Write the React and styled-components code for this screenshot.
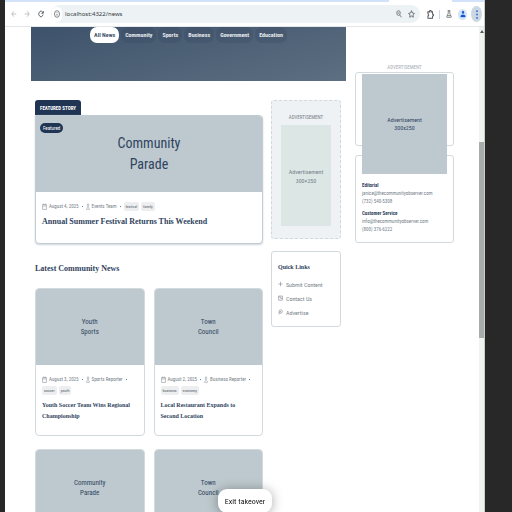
import React from "react";
import styled, { createGlobalStyle, css } from "styled-components";

const sans = `"Roboto Condensed", Roboto, "Liberation Sans", sans-serif`;
const serif = `"Liberation Serif", serif`;
const navy = "#1f3553";
const ink = "#2f4360";
const muted = "#757f8a";
const line = "#d3dade";
const slate = "#bdc9ce";

const GlobalStyle = createGlobalStyle`
  * { box-sizing: border-box; }
  body { margin: 0; background: #282828; font-family: ${sans}; overflow: hidden; }
  h2, h3, p { margin: 0; }
  a { color: inherit; text-decoration: none; }
  button { font-family: inherit; border: 0; padding: 0; cursor: pointer; }
`;

const Desktop = styled.div`
  display: grid;
  grid-template-columns: 5px minmax(0, 1fr) 27px;
  height: 100vh;
  overflow: hidden;
`;
const BrowserWindow = styled.div`
  grid-column: 2;
  display: flex;
  flex-direction: column;
  min-height: 0;
  background: #fff;
  border-right: 1px solid #c9cecb;
`;
const TabStrip = styled.div`
  display: grid;
  grid-template-columns: 385fr 63fr 32fr;
  height: 2px;
  flex: none;
`;
const TabGap = styled.span`
  background: ${(p) => (p.$active ? "#fff" : "#d3e2fb")};
`;
const Toolbar = styled.header`
  display: flex;
  align-items: center;
  height: 25px;
  flex: none;
  padding: 0 2px;
  border-bottom: 1px solid #e3e7ea;
`;
const Tools = styled.div`
  display: flex;
  align-items: center;
  gap: 4px;
`;
const ToolButton = styled.button`
  display: grid;
  place-items: center;
  flex: none;
  width: ${(p) => p.$w || 14}px;
  height: ${(p) => p.$h || 16}px;
  border-radius: 50%;
  background: ${(p) => p.$bg || "transparent"};
  color: ${(p) => p.$color || "#4d5359"};
`;
const Omnibox = styled.div`
  display: flex;
  align-items: center;
  gap: 3px;
  flex: 1;
  min-width: 0;
  height: 18px;
  margin: 0 5px 0 4px;
  padding: 0 3px 0 1px;
  border-radius: 9px;
  background: #edf2f5;
  color: #4d5359;
`;
const InfoDisc = styled.span`
  display: grid;
  place-items: center;
  width: 10px;
  height: 15px;
  border-radius: 5px;
  background: #fff;
`;
const Address = styled.input`
  flex: 1;
  min-width: 0;
  border: 0;
  padding: 0;
  background: transparent;
  font: 6px/16px "Noto Sans", sans-serif;
  color: #34393e;
  outline: none;
`;
const Divider = styled.span`
  width: 1px;
  height: 9px;
  background: #c5d8f4;
`;

const Viewport = styled.div`
  display: flex;
  flex: 1;
  min-height: 0;
`;
const Page = styled.div`
  flex: 1;
  display: grid;
  grid-template-columns: minmax(0, 315fr) minmax(0, 99fr);
  gap: 9px;
  align-items: start;
  padding: 0 25px 0 26px;
  overflow: hidden;
`;
const Scrollbar = styled.div`
  display: flex;
  flex-direction: column;
  align-items: center;
  width: 5px;
  background: #eff4f1;
`;
const ScrollArrow = styled.span`
  margin: 3px 0 109px;
  border: 2px solid transparent;
  border-top: 0;
  border-bottom: 3px solid #555b58;
`;
const ScrollThumb = styled.span`
  width: 100%;
  height: 196px;
  background: #a6adaa;
`;

const Hero = styled.nav`
  display: flex;
  align-items: flex-start;
  justify-content: center;
  gap: 2px;
  height: 54px;
  background: linear-gradient(165deg, #3d526b, #5d6f81);
`;
const Chip = styled.button`
  height: 16px;
  padding: 0 4px;
  border-radius: 7px;
  font-size: 6px;
  font-weight: 700;
  line-height: 16px;
  background: ${(p) => (p.$active ? "#fff" : "rgba(48, 66, 90, 0.22)")};
  color: ${(p) => (p.$active ? "#3d5068" : "#e6eaee")};
`;
const Columns = styled.div`
  display: grid;
  grid-template-columns: minmax(0, 228fr) minmax(0, 70fr);
  gap: 8px;
  align-items: start;
  padding: 19px 5px 0 4px;
`;
const Ribbon = styled.p`
  width: fit-content;
  height: 15px;
  padding: 0 5px;
  border-radius: 3px 3px 0 0;
  background: ${navy};
  color: #fff;
  font-size: 5px;
  font-weight: 700;
  line-height: 16px;
`;
const Card = styled.article`
  position: relative;
  min-height: 148px;
  border: 1px solid ${line};
  border-radius: 4px;
  background: #fff;
  overflow: hidden;
  ${(p) =>
    p.$featured &&
    css`
      min-height: 129px;
      border-top-left-radius: 0;
      border-color: #c3ccd2;
      box-shadow: 0 1px 2px #cdd4da;
    `}
`;
const Picture = styled.div`
  display: flex;
  align-items: center;
  justify-content: center;
  height: 76px;
  background: ${slate};
  color: ${ink};
  text-align: center;
  white-space: pre-line;
  font-size: ${(p) => (p.$large ? 14 : 7)}px;
  line-height: ${(p) => (p.$large ? 21 : 10)}px;
`;
const Badge = styled.span`
  position: absolute;
  top: 7px;
  left: 4px;
  padding: 0 3px;
  border-radius: 5px;
  background: ${navy};
  color: #fff;
  font-size: 5px;
  line-height: 10px;
`;
const CardBody = styled.div`
  padding: 10px 6px 0;
`;
const Meta = styled.div`
  display: flex;
  flex-wrap: wrap;
  align-items: center;
  gap: 2px;
  color: ${muted};
  font-size: 5px;
  line-height: 9px;
  white-space: nowrap;
`;
const Dot = styled.span`
  width: 1px;
  height: 1px;
  margin: 0 1px;
  background: ${muted};
`;
const Tags = styled.div`
  display: flex;
  gap: 2px;
  ${(p) => p.$row && css`flex-basis: 100%;`}
`;
const Tag = styled.span`
  padding: 0 2px;
  border-radius: 2px;
  background: #eceef0;
  color: #4c5662;
  font-size: 4px;
  line-height: 9px;
`;
const Headline = styled.h3`
  margin-top: 5px;
  padding-right: 4px;
  color: ${ink};
  font-family: ${serif};
  font-size: ${(p) => (p.$featured ? 8 : 6)}px;
  font-weight: 700;
  line-height: 11px;
`;
const SectionTitle = styled.h2`
  margin: 19px 0 13px;
  color: ${ink};
  font-family: ${serif};
  font-size: 8px;
  line-height: 12px;
`;
const CardGrid = styled.div`
  display: grid;
  grid-template-columns: repeat(2, minmax(0, 1fr));
  gap: 13px 9px;
`;

const SideColumn = styled.aside`
  display: grid;
  gap: 12px;
`;
const AdPanel = styled.section`
  padding: 12px 9px;
  border: 1px dashed #d0d9de;
  border-radius: 3px;
  background: #eef2f5;
`;
const AdLabel = styled.p`
  color: ${(p) => (p.$light ? "#a6adb4" : muted)};
  font-size: 5px;
  line-height: 9px;
  text-align: center;
`;
const AdBox = styled.div`
  display: grid;
  place-content: center;
  height: 101px;
  margin-top: 3px;
  background: #dce6e5;
  color: ${muted};
  font-size: 6px;
  line-height: 9px;
  text-align: center;
  white-space: pre-line;
`;
const Panel = styled.section`
  border: 1px solid ${line};
  border-radius: 3px;
  padding: 10px 6px 7px;
`;
const PanelTitle = styled.h3`
  margin-bottom: 5px;
  color: ${ink};
  font-family: ${serif};
  font-size: 6px;
  line-height: 10px;
`;
const QuickLink = styled.a`
  display: flex;
  align-items: center;
  gap: 3px;
  height: 14px;
  color: ${muted};
  font-size: 6px;
`;

const OuterRail = styled.aside`
  padding-top: 36px;
`;
const AdSlot = styled(Panel)`
  position: relative;
  height: 74px;
  margin-bottom: 9px;
`;
const FloatingAd = styled.div`
  position: absolute;
  top: 1px;
  left: 6px;
  right: 6px;
  display: grid;
  place-content: center;
  height: 100px;
  background: ${slate};
  color: ${ink};
  font-size: 6px;
  line-height: 8px;
  text-align: center;
  white-space: pre-line;
`;
const ContactPanel = styled(Panel)`
  padding: 25px 6px 5px;
`;
const Contact = styled.address`
  display: flex;
  flex-direction: column;
  margin-bottom: 4px;
  color: ${muted};
  font-size: 5px;
  font-style: normal;
  line-height: 8px;
`;
const ContactName = styled.strong`
  color: ${ink};
`;
const ExitButton = styled.button`
  position: fixed;
  bottom: -1px;
  left: calc(50% - 38px);
  width: 54px;
  height: 24px;
  border-radius: 9px;
  background: #fff;
  color: #141414;
  font-size: 8px;
  box-shadow: 0 1px 12px rgba(0, 0, 0, 0.35);
`;

const shapes = {
  back: <path d="M21 12H4M11 4l-8 8 8 8" />,
  forward: <path d="M3 12h17M13 4l8 8-8 8" />,
  reload: <path d="M20 14a8.5 8.5 0 1 1-2-8l3 3M21 3v7h-7" />,
  info: <><circle cx="12" cy="12" r="10" /><path d="M12 11v6M12 6v2" /></>,
  zoom: <><circle cx="10" cy="9" r="7" /><path d="M15 15l7 7M7 9h6" /></>,
  star: <path d="M12 2l3 7 7 1-5 5 1 7-6-4-6 4 1-7-5-5 7-1z" />,
  puzzle: <path d="M3 5h6V3a2 2 0 0 1 5 0v2h5v6h1a2 2 0 0 1 0 5h-1v6H3v-6a3 3 0 0 0 0-6z" />,
  flask: <path d="M7 2h10M9 2v8L3 20q-1 2 2 2h14q3 0 2-2l-6-10V2M6 17h12" />,
  person: <g fill="currentColor"><circle cx="12" cy="7" r="4" /><path d="M3 21v-3q1-4 9-4t9 4v3z" /></g>,
  dots: <g fill="currentColor" stroke="none"><ellipse cx="12" cy="3" rx="3.4" ry="2.4" /><ellipse cx="12" cy="12" rx="3.4" ry="2.4" /><ellipse cx="12" cy="21" rx="3.4" ry="2.4" /></g>,
  calendar: <path d="M3 5h18v17H3zM3 10h18M8 2v4M16 2v4" />,
  user: <path d="M12 2a4 5 0 1 0 .1 0zM4 22c0-6 3-8 8-8s8 2 8 8z" />,
  plus: <path d="M12 3v18M2 12h20" />,
  mail: <path d="M3 4h18v17H3zM3 8h10v6h8" />,
  advert: <path d="M5 22V10a8 7 0 1 1 7 7h-3v-7h6" />,
};
const Icon = ({ name, w = 7, h = 8, stroke = 2.4 }) => (
  <svg width={w} height={h} viewBox="0 0 24 24" preserveAspectRatio="none" fill="none"
    stroke="currentColor" strokeWidth={stroke} aria-hidden="true">
    {shapes[name]}
  </svg>
);

const categories = ["All News", "Community", "Sports", "Business", "Government", "Education"];
const stories = [
  { art: "Youth\nSports", date: "August 3, 2025", by: "Sports Reporter", tags: ["soccer", "youth"], title: "Youth Soccer Team Wins Regional Championship" },
  { art: "Town\nCouncil", date: "August 2, 2025", by: "Business Reporter", tags: ["business", "economy"], title: "Local Restaurant Expands to Second Location" },
  { art: "Community\nParade" },
  { art: "Town\nCouncil" },
];
const quickLinks = [["plus", "Submit Content"], ["mail", "Contact Us"], ["advert", "Advertise"]];
const contacts = [
  ["Editorial", "janice@thecommunityobserver.com", "(732) 540-5308"],
  ["Customer Service", "info@thecommunityobserver.com", "(800) 376-6222"],
];

const Byline = ({ date, by, tags, tagRow }) => (
  <Meta>
    <Icon name="calendar" w={5} h={7} stroke={2} />
    <time>{date}</time>
    <Dot />
    <Icon name="user" w={4} h={7} stroke={2} />
    <span>{by}</span>
    <Dot />
    <Tags $row={tagRow}>{tags.map((t) => <Tag key={t}>{t}</Tag>)}</Tags>
  </Meta>
);

export default function App() {
  return (
    <>
      <GlobalStyle />
      <Desktop>
        <BrowserWindow>
          <TabStrip><TabGap /><TabGap $active /><TabGap /></TabStrip>
          <Toolbar>
            <ToolButton $w={13} $color="#a3a9ae" aria-label="Back"><Icon name="back" w={6} /></ToolButton>
            <ToolButton $w={14} $color="#a3a9ae" aria-label="Forward"><Icon name="forward" w={6} /></ToolButton>
            <ToolButton $w={13} aria-label="Reload"><Icon name="reload" w={6} stroke={3} /></ToolButton>
            <Omnibox>
              <InfoDisc><Icon name="info" w={6} /></InfoDisc>
              <Address aria-label="Address" defaultValue="localhost:4322/news" />
              <ToolButton $w={9} aria-label="Zoom"><Icon name="zoom" w={6} /></ToolButton>
              <ToolButton $w={11} aria-label="Bookmark"><Icon name="star" /></ToolButton>
            </Omnibox>
            <Tools>
              <ToolButton $w={10} aria-label="Extensions"><Icon name="puzzle" h={9} stroke={3} /></ToolButton>
              <Divider />
              <ToolButton $w={10} aria-label="Labs"><Icon name="flask" w={6} /></ToolButton>
              <ToolButton $w={9} $h={11} $bg="#d5e3fb" $color="#1257d0" aria-label="Profile"><Icon name="person" w={6} stroke={1} /></ToolButton>
              <ToolButton $w={11} $h={16} $bg="#cbd8e4" $color="#2767c9" aria-label="Menu"><Icon name="dots" w={6} h={9} /></ToolButton>
            </Tools>
          </Toolbar>
          <Viewport>
            <Page>
              <main>
                <Hero aria-label="News categories">
                  {categories.map((c, i) => <Chip key={c} $active={i === 0}>{c}</Chip>)}
                </Hero>
                <Columns>
                  <div>
                    <Ribbon>FEATURED STORY</Ribbon>
                    <Card $featured>
                      <Picture $large>{"Community\nParade"}</Picture>
                      <Badge>Featured</Badge>
                      <CardBody>
                        <Byline date="August 4, 2025" by="Events Team" tags={["festival", "family"]} />
                        <Headline $featured><a href="#festival">Annual Summer Festival Returns This Weekend</a></Headline>
                      </CardBody>
                    </Card>
                    <SectionTitle>Latest Community News</SectionTitle>
                    <CardGrid>
                      {stories.map((s, i) => (
                        <Card key={i}>
                          <Picture>{s.art}</Picture>
                          {s.title && (
                            <CardBody>
                              <Byline {...s} tagRow />
                              <Headline><a href={`#story-${i}`}>{s.title}</a></Headline>
                            </CardBody>
                          )}
                        </Card>
                      ))}
                    </CardGrid>
                  </div>
                  <SideColumn>
                    <AdPanel>
                      <AdLabel>ADVERTISEMENT</AdLabel>
                      <AdBox>{"Advertisement\n300×250"}</AdBox>
                    </AdPanel>
                    <Panel>
                      <PanelTitle>Quick Links</PanelTitle>
                      {quickLinks.map(([icon, label]) => (
                        <QuickLink key={label} href={`#${icon}`}><Icon name={icon} w={5} h={6} />{label}</QuickLink>
                      ))}
                    </Panel>
                  </SideColumn>
                </Columns>
              </main>
              <OuterRail>
                <AdLabel $light>ADVERTISEMENT</AdLabel>
                <AdSlot><FloatingAd>{"Advertisement\n300x250"}</FloatingAd></AdSlot>
                <ContactPanel>
                  {contacts.map(([name, mail, phone]) => (
                    <Contact key={name}>
                      <ContactName>{name}</ContactName>
                      <a href={`mailto:${mail}`}>{mail}</a>
                      <span>{phone}</span>
                    </Contact>
                  ))}
                </ContactPanel>
              </OuterRail>
            </Page>
            <Scrollbar><ScrollArrow /><ScrollThumb /></Scrollbar>
          </Viewport>
        </BrowserWindow>
      </Desktop>
      <ExitButton>Exit takeover</ExitButton>
    </>
  );
}
